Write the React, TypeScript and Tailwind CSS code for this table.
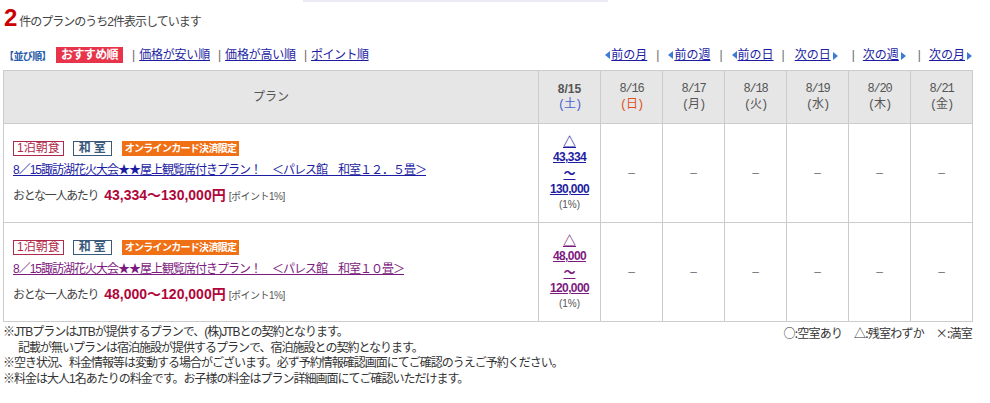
import React from "react";

const Tri = ({ dir }: { dir: "l" | "r" }) => (
  <svg width="5" height="8" viewBox="0 0 5 8" className="inline-block shrink-0">
    {dir === "l" ? (
      <polygon points="5,0 5,8 0,4" fill="#3c7ad6" />
    ) : (
      <polygon points="0,0 0,8 5,4" fill="#3c7ad6" />
    )}
  </svg>
);

const rows = [
  {
    title: "8／15諏訪湖花火大会★★屋上観覧席付きプラン！　＜パレス館　和室１２．５畳＞",
    price: "43,334～130,000円",
    low: "43,334",
    high: "130,000",
    link: "text-[#1d1da3] decoration-[#1d1da3]",
  },
  {
    title: "8／15諏訪湖花火大会★★屋上観覧席付きプラン！　＜パレス館　和室１０畳＞",
    price: "48,000～120,000円",
    low: "48,000",
    high: "120,000",
    link: "text-[#7d1a80] decoration-[#7d1a80]",
  },
];

const dates: [string, string, string][] = [
  ["8/16", "日", "text-[#e0501e]"],
  ["8/17", "月", "text-[#555]"],
  ["8/18", "火", "text-[#555]"],
  ["8/19", "水", "text-[#555]"],
  ["8/20", "木", "text-[#555]"],
  ["8/21", "金", "text-[#555]"],
];

const Sep = ({ cls = "mx-[9px]" }: { cls?: string }) => (
  <span className={`${cls} text-[#666]`}>|</span>
);

export default function App() {
  return (
    <div className="w-[990px] h-[403px] overflow-hidden bg-white text-[#333] text-[12px] font-['Liberation_Sans','Noto_Sans_CJK_JP',sans-serif]">
      <div className="ml-[303px] w-[305px] h-[2px] bg-[#ebebf6]" />

      {/* heading */}
      <div className="pt-[3px] pl-[4px] flex items-baseline h-[29px]">
        <span className="text-[24px] leading-[26px] font-bold text-[#cc0000]">2</span>
        <span className="ml-[2px] tracking-[-1px] text-[#444]">件のプランのうち2件表示しています</span>
      </div>

      {/* sort / nav row */}
      <div className="mt-[16px] h-[16px] flex items-center justify-between pl-[4px] pr-[18px]">
        <div className="flex items-center">
          <span className="text-[10px] font-bold text-[#2a5caa] font-['Noto_Sans_CJK_JP',sans-serif] tracking-[-0.6px]">【並び順】</span>
          <span className="ml-[5px] bg-[#e8344a] text-white px-[5px] h-[16px] leading-[16px] font-bold tracking-[-0.6px]">
            おすすめ順
          </span>
          <Sep cls="ml-[9px] mr-[4px]" />
          <a className="text-[#1d1da3] underline tracking-[-0.2px]">価格が安い順</a>
          <Sep cls="ml-[8px] mr-[4px]" />
          <a className="text-[#1d1da3] underline tracking-[-0.2px]">価格が高い順</a>
          <Sep cls="ml-[8px] mr-[4px]" />
          <a className="text-[#1d1da3] underline tracking-[-0.5px]">ポイント順</a>
        </div>
        <div className="flex items-center">
          <Tri dir="l" />
          <a className="ml-[1px] text-[#1d1da3] underline">前の月</a>
          <Sep />
          <Tri dir="l" />
          <a className="ml-[1px] text-[#1d1da3] underline">前の週</a>
          <Sep />
          <Tri dir="l" />
          <a className="ml-[1px] text-[#1d1da3] underline">前の日</a>
          <Sep cls="ml-[8px] mr-[10px]" />
          <a className="text-[#1d1da3] underline">次の日</a>
          <span className="ml-[2px]"><Tri dir="r" /></span>
          <Sep cls="ml-[14px] mr-[8px]" />
          <a className="text-[#1d1da3] underline">次の週</a>
          <span className="ml-[2px]"><Tri dir="r" /></span>
          <Sep cls="ml-[12px] mr-[8px]" />
          <a className="text-[#1d1da3] underline">次の月</a>
          <span className="ml-[2px]"><Tri dir="r" /></span>
        </div>
      </div>

      {/* table */}
      <div className="mt-[7px] ml-[3px] w-[970px] border-l border-t border-[#cccccc] grid grid-cols-[535px_62px_62px_62px_62px_62px_62px_62px] grid-rows-[53px_99px_99px]">
        {/* header */}
        <div className="border-r border-b border-[#cccccc] bg-[#e6e6e6] flex items-center justify-center text-[#555]">
          プラン
        </div>
        <div className="border-r border-b border-[#cccccc] bg-[#e6e6e6] flex flex-col items-center justify-center leading-[16px]">
          <span className="font-bold text-[#555]">8/15</span>
          <span className="text-[#4a62d0] font-['Liberation_Mono','Noto_Sans_CJK_JP',monospace] tracking-[-1.2px]">(土)</span>
        </div>
        {dates.map(([d, w, c]) => (
          <div
            key={d}
            className="border-r border-b border-[#cccccc] bg-[#e6e6e6] flex flex-col items-center justify-center leading-[16px] font-['Liberation_Mono','Noto_Sans_CJK_JP',monospace] tracking-[-1.2px]"
          >
            <span className="text-[#555]">{d}</span>
            <span className={c}>({w})</span>
          </div>
        ))}

        {rows.map((r, i) => (
          <React.Fragment key={i}>
            <div className="border-r border-b border-[#cccccc] flex flex-col justify-center pl-[9px]">
              <div className="flex items-center gap-[9px]">
                <span className="h-[15px] leading-[13px] px-[3px] border border-[#b0284a] text-[#b0284a]">
                  1泊朝食
                </span>
                <span className="h-[15px] leading-[13px] pl-[5px] pr-[2px] border border-[#3a5a7c] text-[#3a5a7c] font-bold tracking-[3px]">
                  和室
                </span>
                <span className="h-[15px] leading-[15px] px-[3px] bg-[#f07016] text-white text-[10px] font-bold tracking-[-0.7px] ml-[1px]">
                  オンラインカード決済限定
                </span>
              </div>
              <a className={`mt-[6px] leading-[16px] underline tracking-[-1px] ${r.link}`}>{r.title}</a>
              <div className="mt-[8px] leading-[18px] flex items-baseline">
                <span className="tracking-[-1.3px] text-[#444]">おとな一人あたり</span>
                <span className="ml-[6px] text-[14px] font-bold text-[#b0063a]">{r.price}</span>
                <span className="ml-[3px] text-[10px] text-[#555] tracking-[-0.5px]">[ポイント1%]</span>
              </div>
            </div>
            <div className="border-r border-b border-[#cccccc] flex flex-col items-center justify-center leading-[16px]">
              <a className={`underline font-bold text-[13px] font-['Noto_Sans_CJK_JP',sans-serif] ${r.link}`}>△</a>
              <a className={`underline font-bold text-[12px] tracking-[-0.6px] ${r.link}`}>{r.low}</a>
              <a className={`underline font-bold font-['Noto_Sans_CJK_JP',sans-serif] ${r.link}`}>～</a>
              <a className={`underline font-bold text-[12px] tracking-[-0.6px] ${r.link}`}>{r.high}</a>
              <span className="text-[10px] text-[#555]">(1%)</span>
            </div>
            {dates.map(([d]) => (
              <div key={d} className="border-r border-b border-[#cccccc] flex items-center justify-center text-[#777]">
                –
              </div>
            ))}
          </React.Fragment>
        ))}
      </div>

      {/* footer notes */}
      <div className="mt-[3px] flex justify-between pl-[3px] pr-[18px] leading-[15.5px] tracking-[-1px] text-[#333]">
        <div className="flex flex-col">
          <span>※JTBプランはJTBが提供するプランで、(株)JTBとの契約となります。</span>
          <span className="pl-[15px]">記載が無いプランは宿泊施設が提供するプランで、宿泊施設との契約となります。</span>
          <span>※空き状況、料金情報等は変動する場合がございます。必ず予約情報確認画面にてご確認のうえご予約ください。</span>
          <span>※料金は大人1名あたりの料金です。お子様の料金はプラン詳細画面にてご確認いただけます。</span>
        </div>
        <div className="flex gap-[12px] self-start font-['Noto_Sans_CJK_JP',sans-serif] tracking-[-0.8px]">
          <span>○:空室あり</span>
          <span>△:残室わずか</span>
          <span>×:満室</span>
        </div>
      </div>
    </div>
  );
}
